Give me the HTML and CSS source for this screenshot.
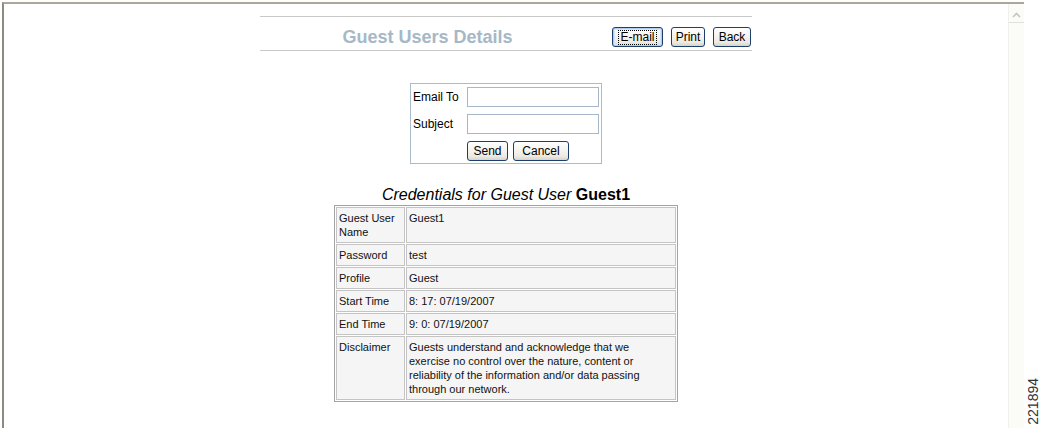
FILE: index.html
```html
<!DOCTYPE html>
<html lang="en">
<head>
<meta charset="utf-8">
<title>Guest Users Details</title>
<link rel="stylesheet" href="styles.css">
</head>
<body>
<div class="frame">
  <div class="content">
    <div class="header">
      <div class="title-cell"><span class="title">Guest Users Details</span></div>
      <div class="actions">
        <button class="btn btn-email is-focused" type="button"><span class="focus-ring">E-mail</span></button>
        <button class="btn btn-print" type="button">Print</button>
        <button class="btn btn-back" type="button">Back</button>
      </div>
    </div>

    <form class="mailbox">
      <label class="lbl" for="to">Email To</label>
      <input class="field" id="to" type="text">
      <label class="lbl" for="subj">Subject</label>
      <input class="field" id="subj" type="text">
      <span class="spacer"></span>
      <div class="mail-actions">
        <button class="btn btn-send" type="button">Send</button>
        <button class="btn btn-cancel" type="button">Cancel</button>
      </div>
    </form>

    <div class="caption"><em class="cap-label">Credentials for Guest User</em> <strong class="cap-user">Guest1</strong></div>

    <table class="creds">
      <tr><td class="key">Guest User Name</td><td class="val">Guest1</td></tr>
      <tr><td class="key">Password</td><td class="val">test</td></tr>
      <tr><td class="key">Profile</td><td class="val">Guest</td></tr>
      <tr><td class="key">Start Time</td><td class="val">8: 17: 07/19/2007</td></tr>
      <tr><td class="key">End Time</td><td class="val">9: 0: 07/19/2007</td></tr>
      <tr><td class="key">Disclaimer</td><td class="val">Guests understand and acknowledge that we<br>exercise no control over the nature, content or<br>reliability of the information and/or data passing<br>through our network.</td></tr>
    </table>
  </div>
  <div class="scrollbar">
    <div class="sb-up">
      <svg class="sb-arrow" width="9" height="6" viewBox="0 0 9 6"><path d="M1 5 L4.5 1.5 L8 5" fill="none" stroke="#c6c6bd" stroke-width="1.6"/></svg>
    </div>
  </div>
</div>
<div class="figure-strip"><span class="fig-id">221894</span></div>
</body>
</html>
```

FILE: styles.css
```css
* { box-sizing: border-box; }

html, body {
  margin: 0;
  padding: 0;
  background: #ffffff;
}

body {
  width: 1042px;
  height: 428px;
  overflow: hidden;
  display: flex;
  font-family: "Liberation Sans", Arial, sans-serif;
  color: #000;
}

.frame {
  width: 1022px;
  margin-top: 2px;
  margin-left: 2px;
  border-top: 2px solid #aca899;
  border-left: 2px solid #8d8b7e;
  display: flex;
}

.content {
  width: 1004px;
  padding-top: 12px;
  display: flex;
  flex-direction: column;
  align-items: center;
}

/* header */
.header {
  width: 492px;
  border-top: 1px solid #c9c9c9;
  border-bottom: 1px solid #c9c9c9;
  display: flex;
  padding: 10px 1px 3px 0;
}

.title-cell {
  width: 335px;
  text-align: center;
}

.title {
  font-size: 18px;
  font-weight: bold;
  line-height: 20px;
  color: #a6b8c6;
}

.actions {
  flex: 1;
  display: flex;
  justify-content: flex-end;
  gap: 8px;
}

.btn {
  height: 20px;
  padding: 0;
  border: 1px solid #1c3f6e;
  border-radius: 3px;
  background: linear-gradient(#ffffff 0%, #f5f4ef 45%, #ebe9e1 80%, #d8d3c7 100%);
  font-family: "Liberation Sans", Arial, sans-serif;
  font-size: 12px;
  line-height: 16px;
  color: #000;
  text-align: center;
  display: flex;
  align-items: center;
  justify-content: center;
}

.btn-email { width: 51px; box-shadow: inset 0 0 0 1px #b3cdf2, inset 0 0 0 2px #d6e5fa; }
.btn-print { width: 34px; }
.btn-back { width: 38px; }
.btn-send { width: 41px; }
.btn-cancel { width: 56px; }

.focus-ring {
  outline: 1px dotted #000;
  padding: 0 1px;
  line-height: 13px;
}

/* email form */
.mailbox {
  margin-top: 32px;
  width: 192px;
  border: 1px solid #a8bccb;
  padding: 3px 2px 2px 2px;
  display: grid;
  grid-template-columns: 54px 132px;
  grid-auto-rows: 20px;
  row-gap: 7px;
  align-items: center;
}

.lbl {
  font-size: 12px;
  line-height: 14px;
}

.field {
  width: 132px;
  height: 20px;
  margin: 0;
  border: 1px solid #a5b7c8;
  background: #fff;
  padding: 0 2px;
}

.mail-actions {
  display: flex;
  gap: 5px;
}

/* caption */
.caption {
  margin-top: 21px;
  font-size: 16px;
  line-height: 19px;
}

.cap-label { font-style: italic; }
.cap-user { font-weight: bold; }

/* credentials table */
.creds {
  margin-top: 1px;
  width: 344px;
  border: 1px solid #a3a3a3;
  border-spacing: 1px;
  font-size: 11px;
  line-height: 14px;
  color: #111;
}

.creds td {
  border: 1px solid #c4c4c4;
  background: #f5f5f5;
  padding: 3px 2px;
  vertical-align: top;
}

.creds .key {
  width: 69px;
}

/* scrollbar */
.scrollbar {
  width: 16px;
  background: #fbfbf7;
  border-left: 1px solid #f1f0ea;
  padding-top: 3px;
}

.sb-up {
  height: 16px;
  border-bottom: 1px solid #e2e1d8;
  display: flex;
  align-items: center;
  justify-content: center;
}

/* figure id */
.figure-strip {
  width: 18px;
  display: flex;
  flex-direction: column;
  justify-content: flex-end;
  align-items: center;
  padding-bottom: 3px;
}

.fig-id {
  writing-mode: vertical-rl;
  transform: rotate(180deg);
  font-size: 14px;
  line-height: 16px;
  color: #333;
}
```
